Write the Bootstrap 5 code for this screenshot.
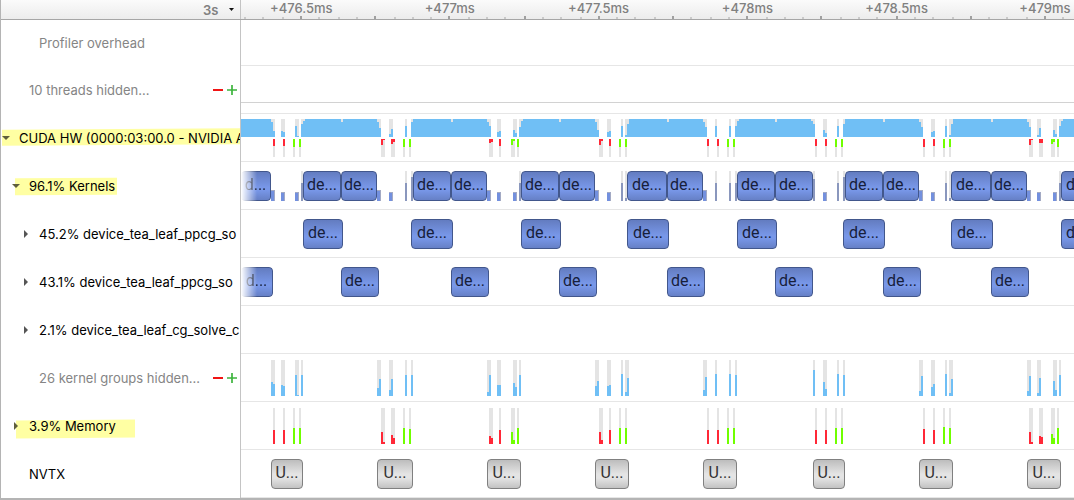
<!DOCTYPE html>
<html lang="en">
<head>
<meta charset="utf-8">
<meta name="viewport" content="width=device-width, initial-scale=1">
<title>Profiler timeline</title>
<link href="https://cdn.jsdelivr.net/npm/bootstrap@5.3.0/dist/css/bootstrap.min.css" rel="stylesheet">
<style>
  body { font-family: Inter, "Liberation Sans", sans-serif; font-size: 13px; line-height: 18px; color: #000; background: #fff; }
  .timeline { border-left: 1px solid #b4b4b4; border-bottom: 2px solid #b4b4b4; }
  .ruler { height: 20px; border-bottom: 1px solid #a6a6a6; background: linear-gradient(#fbfbfb, #ececec); color: #808080; font-weight: 600; }
  .side { width: 240px; border-right: 1px solid #c4c4c4; white-space: nowrap; }
  .side-end { padding-right: 3px; }
  .scale-end { padding-right: 5px; }
  .axis, .lane { min-width: 0; }
  .stack { display: grid; grid-template: 100% / 100%; }
  .stack > * { grid-area: 1 / 1; min-width: 0; }
  .axis-label { flex: none; text-align: center; line-height: 17px; font-weight: 500; }
  .range { appearance: none; border: 0; background: none; color: inherit; font: inherit; padding: 0; width: 18px; }
  .track { height: 48px; }
  .track.first { height: 46px; }
  .lane { border-bottom: 1px solid #e6e6e6; }
  .lane-end { height: 37px; border-bottom: 1px solid #d2d2d2; }
  .level-1 { padding-left: 10px; }
  .level-2 { padding-left: 20px; }
  .caret-cell { width: 10px; margin-right: 8px; flex: none; }
  .bare { border: 0; background: none; padding: 0; line-height: 0; }
  .dim { color: #858585; }
  .marker { position: relative; z-index: 0; }
  .marker::before { content: ""; position: absolute; z-index: -1; inset: 15px 0 17px 1px; background: #ffffa3; transform: skewY(-0.4deg); }
  .marker.short::before { inset: 16px 123px 15px 14px; }
  .marker.mid::before { inset: 18px 105px 12px 15px; }
  .events { padding-top: 9px; }
  .event { flex: none; height: 30px; border: 1px solid #42578c; border-radius: 4px; background: linear-gradient(#637cc0, #7897e8 55%, #7897e8 65%, #6680c6); color: #17203b; font: 16px/24px Roboto, "Liberation Sans", sans-serif; padding: 0 0 2px; overflow: hidden; text-align: center; white-space: nowrap; }
  .event.range-u { border-color: #808080; background: linear-gradient(#bdbdbd, #e4e4e4 50%, #e4e4e4 65%, #c2c2c2); color: #333; }
  .event.cut { mask-image: linear-gradient(to right, transparent, #000 16px); -webkit-mask-image: linear-gradient(to right, transparent, #000 16px); border-left: 0; }
  svg.plot { width: 100%; height: 100%; display: block; }
</style>
</head>
<body>
<main class="timeline">
  <header class="ruler d-flex">
    <div class="side d-flex align-items-center justify-content-end scale-end">
      <label for="scale" class="visually-hidden">Time scale</label>
      <select id="scale" class="range"><option>3s</option></select>
      <svg class="ms-2" width="6" height="4"><path d="M0 0h5L2.500 3z" fill="#111"/></svg>
    </div>
    <div class="axis stack flex-fill overflow-hidden">
      <svg class="plot" id="ticks" viewBox="0 0 833 19" preserveAspectRatio="none" shape-rendering="crispEdges"></svg>
      <div class="d-flex" id="axisLabels"></div>
    </div>
  </header>

  <section class="track first d-flex">
    <div class="side d-flex align-items-center level-2"><span class="caret-cell"></span><span class="dim">Profiler overhead</span></div>
    <div class="lane flex-fill"></div>
  </section>
  <section class="track d-flex">
    <div class="side d-flex align-items-center level-1 side-end">
      <span class="caret-cell"></span><span class="dim flex-fill">10 threads hidden...</span>
      <button class="bare me-1" aria-label="Show fewer threads"><svg width="10" height="10"><path d="M0 5h10" stroke="#f01414" stroke-width="2"/></svg></button>
      <button class="bare" aria-label="Show more threads"><svg width="10" height="10"><path d="M0 5h10M5 0v10" stroke="#3db43d" stroke-width="1.700"/></svg></button>
    </div>
    <div class="lane flex-fill"><div class="lane-end"></div></div>
  </section>
  <section class="track d-flex">
    <div class="side d-flex align-items-center overflow-hidden marker">
      <button class="bare caret-cell" aria-label="Collapse CUDA HW"><svg width="10" height="8"><path d="M1 2h8L5 6z" fill="#5f5f3c"/></svg></button><span>CUDA HW (0000:03:00.0 - NVIDIA A</span>
    </div>
    <div class="lane flex-fill"><svg class="plot" id="hw" viewBox="0 0 833 47" preserveAspectRatio="none" shape-rendering="crispEdges"></svg></div>
  </section>
  <section class="track d-flex">
    <div class="side d-flex align-items-center level-1 marker short">
      <button class="bare caret-cell" aria-label="Collapse kernels"><svg width="10" height="8"><path d="M1 2h8L5 6z" fill="#5f5f3c"/></svg></button><span>96.1% Kernels</span>
    </div>
    <div class="lane stack flex-fill overflow-hidden">
      <svg class="plot" id="kernelBars" viewBox="0 0 833 47" preserveAspectRatio="none" shape-rendering="crispEdges"></svg>
      <div class="events d-flex" id="kernels"></div>
    </div>
  </section>
  <section class="track d-flex">
    <div class="side d-flex align-items-center overflow-hidden level-2">
      <button class="bare caret-cell" aria-label="Expand kernel"><svg width="10" height="10"><path d="M3 1l4 4-4 4z" fill="#555"/></svg></button><span>45.2% device_tea_leaf_ppcg_so</span>
    </div>
    <div class="lane flex-fill overflow-hidden"><div class="events d-flex" id="ppcgA"></div></div>
  </section>
  <section class="track d-flex">
    <div class="side d-flex align-items-center overflow-hidden level-2">
      <button class="bare caret-cell" aria-label="Expand kernel"><svg width="10" height="10"><path d="M3 1l4 4-4 4z" fill="#555"/></svg></button><span>43.1% device_tea_leaf_ppcg_so</span>
    </div>
    <div class="lane flex-fill overflow-hidden"><div class="events d-flex" id="ppcgB"></div></div>
  </section>
  <section class="track d-flex">
    <div class="side d-flex align-items-center overflow-hidden level-2">
      <button class="bare caret-cell" aria-label="Expand kernel"><svg width="10" height="10"><path d="M3 1l4 4-4 4z" fill="#555"/></svg></button><span>2.1% device_tea_leaf_cg_solve_c</span>
    </div>
    <div class="lane flex-fill"></div>
  </section>
  <section class="track d-flex">
    <div class="side d-flex align-items-center level-2 side-end">
      <span class="caret-cell"></span><span class="dim flex-fill">26 kernel groups hidden...</span>
      <button class="bare me-1" aria-label="Show fewer kernel groups"><svg width="10" height="10"><path d="M0 5h10" stroke="#f01414" stroke-width="2"/></svg></button>
      <button class="bare" aria-label="Show more kernel groups"><svg width="10" height="10"><path d="M0 5h10M5 0v10" stroke="#3db43d" stroke-width="1.700"/></svg></button>
    </div>
    <div class="lane flex-fill"><svg class="plot" id="groups" viewBox="0 0 833 47" preserveAspectRatio="none" shape-rendering="crispEdges"></svg></div>
  </section>
  <section class="track d-flex">
    <div class="side d-flex align-items-center level-1 marker mid">
      <button class="bare caret-cell" aria-label="Expand memory"><svg width="10" height="10"><path d="M3 1l4 4-4 4z" fill="#5f5f3c"/></svg></button><span>3.9% Memory</span>
    </div>
    <div class="lane flex-fill"><svg class="plot" id="memory" viewBox="0 0 833 47" preserveAspectRatio="none" shape-rendering="crispEdges"></svg></div>
  </section>
  <section class="track d-flex">
    <div class="side d-flex align-items-center level-1"><span class="caret-cell"></span><span>NVTX</span></div>
    <div class="lane flex-fill overflow-hidden"><div class="events d-flex" id="nvtx"></div></div>
  </section>
</main>

<script src="https://cdn.jsdelivr.net/npm/bootstrap@5.3.0/dist/js/bootstrap.bundle.min.js"></script>
<script>
  // Times are in timeline units: the visible window runs from START for SPAN units.
  const START = 241, SPAN = 833;
  const BLUE = '#70bff5', RED = '#ff2837', GREEN = '#70ff00', GREY = '#e4e4e4', KERNEL = '#7390de';
  const $ = id => document.getElementById(id);
  const pct = n => (n / SPAN * 100) + '%';
  const rect = (x, y, w, h, fill) => `<rect x="${x - START}" y="${y}" width="${w}" height="${h}" fill="${fill}"/>`;
  const column = (x, w, h, top, full, fill) => rect(x, top, w, full, GREY) + rect(x, top + full - h, w, h, fill);

  // Ruler
  let marks = '';
  for (let i = -3; i < 42; i++) {
    const x = Math.round((301 + i * 18.6 - START) / 2) * 2 + START - 1;
    marks += i % 4 === 0 ? rect(x, 16, 2, 3, '#a0a0a0') : rect(x, 17, 2, 2, '#cacaca');
  }
  $('ticks').innerHTML = marks;
  ['+476.5ms', '+477ms', '+477.5ms', '+478ms', '+478.5ms', '+479ms'].forEach((t, i) => {
    const el = document.createElement('span');
    el.className = 'axis-label';
    el.textContent = t;
    el.style.width = pct(62);
    el.style.marginLeft = pct(i === 0 ? 301 - 31 - START : 148.8 - 62);
    $('axisLabels').append(el);
  });

  // Named ranges
  function events(id, list, text, cls) {
    let at = START;
    for (const [from, to] of list) {
      const b = document.createElement('button');
      const cut = from === START;
      b.className = 'event ' + (cls || '') + (cut ? ' cut' : '');
      b.textContent = cut ? 'd...' : text;
      b.style.width = pct(to - from);
      b.style.marginLeft = pct(from - at);
      at = to;
      $(id).append(b);
    }
  }
  events('kernels', [[241,271],[303,341],[341,377],[413,451],[451,487],[521,559],[559,595],[627,667],[667,703],[737,775],[775,813],[845,883],[883,919],[951,991],[991,1027],[1061,1101]], 'de...');
  events('ppcgA', [[303,343],[411,453],[521,561],[627,669],[737,777],[843,885],[951,993],[1061,1101]], 'de...');
  events('ppcgB', [[241,273],[341,379],[451,489],[559,597],[667,705],[775,813],[883,921],[991,1029]], 'de...');
  events('nvtx', [[271,303],[377,413],[487,521],[595,629],[703,737],[813,845],[919,953],[1027,1061]], 'U...', 'range-u');

  // Utilisation columns: [time, height]
  const groups = [[271,14],[273,12],[281,11],[283,10],[295,21],[297,1],[301,21],[377,8],[379,17],[389,6],[391,17],[405,21],[411,21],[487,4],[489,21],[497,11],[499,11],[513,13],[515,9],[519,21],[595,10],[597,15],[607,10],[609,11],[621,22],[625,4],[627,18],[703,6],[705,19],[715,22],[729,22],[735,21],[813,26],[823,14],[825,7],[837,22],[843,21],[919,5],[921,20],[931,9],[933,12],[945,22],[949,3],[951,17],[1027,5],[1029,20],[1037,3],[1039,18],[1053,15],[1055,6],[1059,21]];
  $('groups').innerHTML = groups.map(([x, h]) => column(x, 2, h, 6, 36, BLUE)).join('');

  const memory = [[273,14,RED],[283,14,RED],[293,16,GREEN],[299,16,GREEN],[381,12,RED],[383,2,RED],[391,9,RED],[393,6,RED],[403,16,GREEN],[409,15,GREEN],[489,8,RED],[491,6,RED],[499,14,RED],[511,12,GREEN],[513,4,GREEN],[517,16,GREEN],[599,12,RED],[601,4,RED],[609,14,RED],[619,16,GREEN],[625,16,GREEN],[707,14,RED],[717,14,RED],[727,16,GREEN],[733,16,GREEN],[815,14,RED],[825,14,RED],[835,16,GREEN],[841,16,GREEN],[923,15,RED],[933,14,RED],[943,17,GREEN],[949,16,GREEN],[1029,12,RED],[1031,2,RED],[1039,8,RED],[1041,7,RED],[1051,10,GREEN],[1053,6,GREEN],[1057,16,GREEN]];
  $('memory').innerHTML = memory.map(([x, h, c]) => column(x, 2, h, 6, 36, c)).join('');

  const busy = [[241,271],[305,377],[413,487],[523,595],[629,703],[739,811],[845,919],[953,1027],[1063,1074]];
  const partial = [[271,15],[273,6],[281,6],[283,5],[295,11],[297,1],[301,13],[303,16],[341,15],[377,15],[379,9],[389,3],[391,8],[405,11],[411,15],[451,15],[487,15],[489,11],[497,5],[499,6],[513,7],[515,4],[519,10],[521,16],[559,15],[595,15],[597,7],[607,5],[609,6],[621,11],[625,2],[627,13],[667,15],[703,15],[705,10],[715,11],[729,11],[735,11],[737,16],[775,15],[811,16],[813,13],[823,7],[825,4],[837,11],[843,13],[883,15],[919,15],[921,10],[931,5],[933,6],[945,11],[949,2],[951,13],[991,15],[1027,15],[1029,10],[1037,2],[1039,9],[1053,7],[1055,3],[1059,11],[1061,16]];
  $('hw').innerHTML = busy.map(([a, b]) => rect(a, 5, b - a, 18, BLUE)).join('')
    + partial.map(([x, h]) => column(x, 2, h, 5, 18, BLUE)).join('')
    + memory.map(([x, h, c]) => rect(x, 25, 2, 18, GREY) + rect(x, 25, 2, Math.ceil(h / 2), c)).join('');

  const shortKernels = [[271,11],[281,9],[295,9],[377,11],[389,9],[487,11],[497,9],[513,9],[595,11],[607,9],[703,11],[823,9],[919,11],[931,9],[1027,11],[1037,9],[1053,9]];
  const thinKernels = [[301,18],[405,18],[411,24],[519,18],[621,18],[625,3],[715,18],[729,18],[735,18],[813,22],[837,18],[843,24],[945,18],[949,3],[1059,18]];
  $('kernelBars').innerHTML = shortKernels.map(([x, h]) => rect(x, 39 - h, 4, h, '#a3aac4') + rect(x, 40 - h, 3, h - 1, KERNEL)).join('')
    + thinKernels.map(([x, h]) => column(x, 2, h, 9, 30, '#8a97bd')).join('');
</script>
</body>
</html>
